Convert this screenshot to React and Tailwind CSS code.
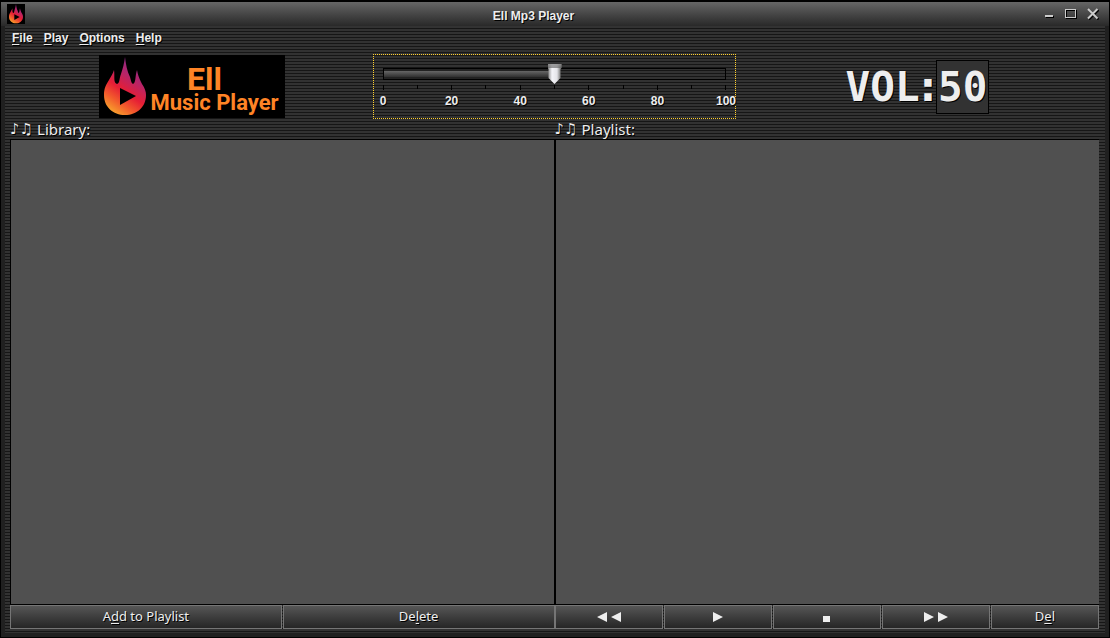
import { useId, useState } from "react";

const stripes =
  "bg-[repeating-linear-gradient(to_bottom,#323232_0px,#323232_2px,#161616_2px,#161616_3px)]";
const shadow = "[text-shadow:1px_1px_0_#000]";

function Flame({ className }) {
  const id = useId();
  return (
    <svg className={className} viewBox="0 0 44 60" aria-hidden="true">
      <defs>
        <linearGradient id={id} x1="0.8" y1="0" x2="0.3" y2="1">
          <stop offset="0.1" stopColor="#8a2a86" />
          <stop offset="0.35" stopColor="#b82468" />
          <stop offset="0.6" stopColor="#e61e35" />
          <stop offset="0.8" stopColor="#f25a2c" />
          <stop offset="1" stopColor="#f8a02c" />
        </linearGradient>
      </defs>
      <path
        fill={`url(#${id})`}
        d="M22 0C23 8 24 14 27 20C28 23 28 26 30 27C33 26 32 19 34 13C35 19 37 23 39 27C42 31 43 35 43 38C43 50 34 58 22 58C10 58 1 50 1 38C1 31 3 28 6 23C9 18 10 16 11 13C12 19 10 26 14 27C17 26 16 22 18 17C20 11 21 7 22 0Z"
      />
      <path fill="#000" d="M17 31L33 39L17 48Z" />
    </svg>
  );
}

function TitleBar() {
  const control = "flex h-5 w-[22px] items-center justify-center";
  return (
    <header className="flex h-6 items-center bg-linear-to-b from-[#666] to-[#292929] pl-1.5 pr-[5px]">
      <span className="flex h-5 w-[18px] items-center justify-center bg-black">
        <Flame className="h-5 w-4" />
      </span>
      <h1 className={`flex-1 pl-1 pt-1 text-center text-xs font-bold ${shadow}`}>
        Ell Mp3 Player
      </h1>
      <div className="flex">
        <button type="button" aria-label="Minimize" className={control}>
          <svg className="size-3" viewBox="0 0 12 12" shapeRendering="crispEdges">
            <path fill="#000" d="M3 8h8v2H3z" />
            <path fill="#ccc" d="M2 7h8v2H2z" />
          </svg>
        </button>
        <button type="button" aria-label="Maximize" className={control}>
          <svg className="size-3" viewBox="0 0 12 12" shapeRendering="crispEdges">
            <path fill="none" stroke="#000" d="M1.5 2.5h10v8h-10z" />
            <path fill="none" stroke="#ccc" d="M.5 1.5h10v8H.5z" />
          </svg>
        </button>
        <button type="button" aria-label="Close" className={control}>
          <svg className="size-3" viewBox="0 0 12 12">
            <path stroke="#000" strokeWidth="2" d="M2 2l9.500 9.500M11.500 2L2 11.500" />
            <path stroke="#ccc" strokeWidth="2" d="M1 1l9.500 9.500M10.500 1L1 10.500" />
          </svg>
        </button>
      </div>
    </header>
  );
}

function MenuBar() {
  return (
    <nav className="flex h-7 items-center gap-[11px] px-[7px] pb-1">
      {["File", "Play", "Options", "Help"].map((name) => (
        <button key={name} type="button" className={`text-xs font-bold ${shadow}`}>
          <u className="underline-offset-2">{name[0]}</u>
          {name.slice(1)}
        </button>
      ))}
    </nav>
  );
}

function Logo() {
  return (
    <div className="flex h-[63px] w-[186px] items-center bg-black pl-1 font-['Roboto',sans-serif] font-bold text-[#ff8426]">
      <Flame className="h-[60px] w-11 shrink-0" />
      <div className="flex flex-col items-center pl-1 pt-1">
        <span className="pr-5 text-[32px] leading-7">Ell</span>
        <span className="whitespace-nowrap text-[22px] leading-5">Music Player</span>
      </div>
    </div>
  );
}

function VolumeSlider({ value, onChange }) {
  const marks = [0, 10, 20, 30, 40, 50, 60, 70, 80, 90, 100];
  return (
    <div className="flex h-[65px] flex-col border border-dotted border-[#ffd02e] px-[9px] pt-[9px]">
      <input
        type="range"
        min="0"
        max="100"
        value={value}
        onChange={(e) => onChange(Number(e.target.value))}
        aria-label="Volume"
        style={{ "--fill": `${value}%` }}
        className="block h-5 w-full appearance-none bg-transparent outline-none [&::-webkit-slider-runnable-track]:h-3 [&::-webkit-slider-runnable-track]:border [&::-webkit-slider-runnable-track]:border-black [&::-webkit-slider-runnable-track]:bg-[linear-gradient(to_bottom,#222_2px,#666_2px,#303030_8px,#222_8px)] [&::-webkit-slider-runnable-track]:bg-[length:var(--fill)_100%] [&::-webkit-slider-runnable-track]:bg-no-repeat [&::-webkit-slider-thumb]:-mt-[5px] [&::-webkit-slider-thumb]:h-5 [&::-webkit-slider-thumb]:w-3.5 [&::-webkit-slider-thumb]:appearance-none [&::-webkit-slider-thumb]:bg-[linear-gradient(to_bottom,#8a8a8acc_0px,#5a5a5a99_4px,transparent_4px),linear-gradient(to_right,#888_0px,#f4f4f8_4px,#e4e4e8_9px,#8c8c8c_12px,#666_14px)] [&::-webkit-slider-thumb]:[clip-path:polygon(0_0,100%_0,100%_20%,93%_25%,93%_70%,50%_100%,7%_70%,7%_25%,0_20%)]"
      />
      <div className="mt-px flex justify-between">
        {marks.map((mark) => (
          <div key={mark} className="flex h-6 w-0 flex-col items-center">
            <span className={mark % 20 ? "h-1 w-px bg-black" : "h-[7px] w-px bg-black"} />
            {mark % 20 === 0 && (
              <span className={`pt-[3px] text-xs font-bold ${shadow}`}>{mark}</span>
            )}
          </div>
        ))}
      </div>
    </div>
  );
}

function VolumeReadout({ value }) {
  return (
    <div
      className={`flex items-center font-['DejaVu_Sans_Mono',monospace] text-[41px] font-bold leading-[52px] ${shadow}`}
    >
      <span>
        VOL<span className="font-['DejaVu_Sans',sans-serif]">:</span>
      </span>
      <output className="border border-black bg-[#323232] px-px">{value}</output>
    </div>
  );
}

const buttonStyle =
  "flex h-6 flex-1 items-center justify-center border border-[#757575] bg-linear-to-b from-[#565656] to-[#262626] font-['Noto_Sans','DejaVu_Sans',sans-serif] text-[13px]";

function TextButton({ before = "", mnemonic, after }) {
  return (
    <button type="button" className={buttonStyle}>
      <span className={shadow}>
        {before}
        <u className="underline-offset-2">{mnemonic}</u>
        {after}
      </span>
    </button>
  );
}

const transport = [
  { name: "Previous", d: "M10 0v10L0 5zM24 0v10L14 5z", width: "w-6", box: "0 0 24 10" },
  { name: "Play", d: "M0 0v10l10-5z", width: "w-2.5", box: "0 0 10 10" },
  { name: "Stop", d: "M1 4h7v6H1z", width: "w-2.5", box: "0 0 10 10" },
  { name: "Next", d: "M0 0v10l10-5zM14 0v10l10-5z", width: "w-6", box: "0 0 24 10" },
];

function ListPanel({ title, className, children }) {
  const id = useId();
  return (
    <section className="flex flex-1 flex-col">
      <h2
        id={id}
        className={`flex h-5 items-center gap-1 font-['Noto_Sans','DejaVu_Sans',sans-serif] text-[15px] leading-5 ${shadow}`}
      >
        <span className="font-['DejaVu_Sans',sans-serif] font-bold">♪♫</span>
        {title}
      </h2>
      <ul
        role="listbox"
        aria-labelledby={id}
        className={`flex-1 border-y border-black bg-[#505050] ${className}`}
      />
      <div className="flex gap-px">{children}</div>
    </section>
  );
}

export default function App() {
  const [volume, setVolume] = useState(50);
  return (
    <div className="flex min-h-screen flex-col border border-t-2 border-black bg-[#202020] font-['Liberation_Sans',Arial,sans-serif] text-[#eee]">
      <TitleBar />
      <main className={`mx-1 mb-1 flex flex-1 flex-col pb-1 ${stripes}`}>
        <MenuBar />
        <div className="grid grid-cols-3 items-center pl-[5px] pr-1.5">
          <div className="flex justify-center">
            <Logo />
          </div>
          <VolumeSlider value={volume} onChange={setVolume} />
          <div className="flex justify-center">
            <VolumeReadout value={volume} />
          </div>
        </div>
        <div className="flex flex-1 pl-[5px] pr-1.5">
          <ListPanel title="Library:" className="border-x">
            <TextButton before="A" mnemonic="d" after="d to Playlist" />
            <TextButton before="De" mnemonic="l" after="ete" />
          </ListPanel>
          <ListPanel title="Playlist:" className="border-l">
            {transport.map(({ name, d, width, box }) => (
              <button key={name} type="button" aria-label={name} className={buttonStyle}>
                <svg className={`h-2.5 ${width}`} viewBox={box}>
                  <path fill="#eee" d={d} />
                </svg>
              </button>
            ))}
            <TextButton before="D" mnemonic="e" after="l" />
          </ListPanel>
        </div>
      </main>
    </div>
  );
}
